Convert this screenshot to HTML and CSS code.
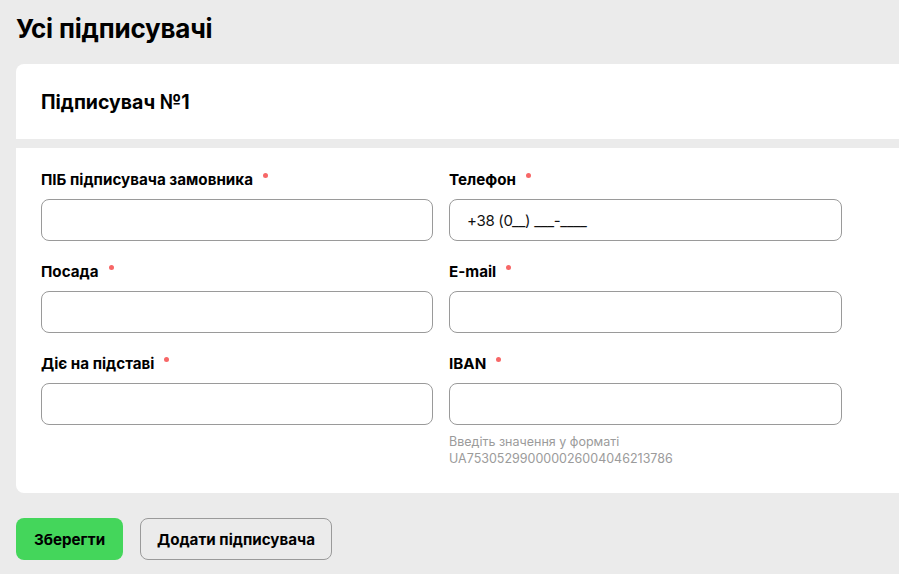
FILE: index.html
```html
<!DOCTYPE html>
<html lang="uk">
<head>
<meta charset="utf-8">
<title>Усі підписувачі</title>
<link rel="stylesheet" href="styles.css">
</head>
<body>
<div class="page">
  <h1 class="title">Усі підписувачі</h1>
  <section class="card">
    <div class="card-head">Підписувач №1</div>
    <div class="card-body">
      <div class="field">
        <label class="label">ПІБ підписувача замовника<span class="req"></span></label>
        <div class="input"></div>
      </div>
      <div class="field">
        <label class="label">Телефон<span class="req"></span></label>
        <div class="input"><span class="mask">+38 (0__) ___-____</span></div>
      </div>
      <div class="field">
        <label class="label">Посада<span class="req"></span></label>
        <div class="input"></div>
      </div>
      <div class="field">
        <label class="label">E-mail<span class="req"></span></label>
        <div class="input"></div>
      </div>
      <div class="field">
        <label class="label">Діє на підставі<span class="req"></span></label>
        <div class="input"></div>
      </div>
      <div class="field">
        <label class="label">IBAN<span class="req"></span></label>
        <div class="input"></div>
        <p class="hint">Введіть значення у форматі<br>UA753052990000026004046213786</p>
      </div>
    </div>
  </section>
  <div class="actions">
    <button class="btn btn-primary">Зберегти</button>
    <button class="btn btn-outline">Додати підписувача</button>
  </div>
</div>
</body>
</html>
```

FILE: styles.css
```css
html, body {
  margin: 0;
  padding: 0;
  background: #ebebeb;
  overflow: hidden;
}
body {
  font-family: Inter, "Noto Sans", "Liberation Sans", sans-serif;
  color: #000;
}
.page {
  padding: 13px 0 0 16px;
  width: 920px;
}
.title {
  margin: 0;
  font-size: 26px;
  line-height: 32px;
  font-weight: 700;
  letter-spacing: -0.2px;
}
.card {
  margin-top: 19px;
  display: flex;
  flex-direction: column;
  gap: 9px;
}
.card-head {
  background: #fff;
  height: 75px;
  border-radius: 8px 8px 0 0;
  padding-left: 25px;
  display: flex;
  align-items: center;
  font-size: 19.5px;
  font-weight: 700;
}
.card-body {
  background: #fff;
  border-radius: 0 0 8px 8px;
  padding: 22px 25px 26px;
  display: grid;
  grid-template-columns: 392px 393px;
  column-gap: 16px;
  row-gap: 21px;
  align-items: start;
}
.field {
  display: flex;
  flex-direction: column;
}
.label {
  font-size: 15.2px;
  line-height: 20px;
  font-weight: 700;
  margin-bottom: 9px;
}
.req {
  display: inline-block;
  width: 5px;
  height: 5px;
  border-radius: 50%;
  background: #f76767;
  margin-left: 10px;
  vertical-align: top;
  margin-top: 3px;
}
.input {
  height: 42px;
  box-sizing: border-box;
  border: 1px solid #9a9a9a;
  border-radius: 8px;
  padding: 0 17px;
  display: flex;
  align-items: center;
  font-size: 15px;
}
.mask {
  color: #111;
  letter-spacing: -0.3px;
}
.hint {
  margin: 8px 0 0;
  font-size: 12.5px;
  line-height: 17px;
  color: #9b9b9b;
}
.actions {
  margin-top: 25px;
  display: flex;
  gap: 17px;
}
.btn {
  height: 42px;
  box-sizing: border-box;
  border-radius: 8px;
  font-family: inherit;
  font-size: 15.2px;
  font-weight: 700;
  color: #000;
  cursor: pointer;
  padding: 0;
}
.btn-primary {
  width: 107px;
  background: #44d65b;
  border: none;
}
.btn-outline {
  width: 192px;
  background: transparent;
  border: 1px solid #9a9a9a;
}
```
